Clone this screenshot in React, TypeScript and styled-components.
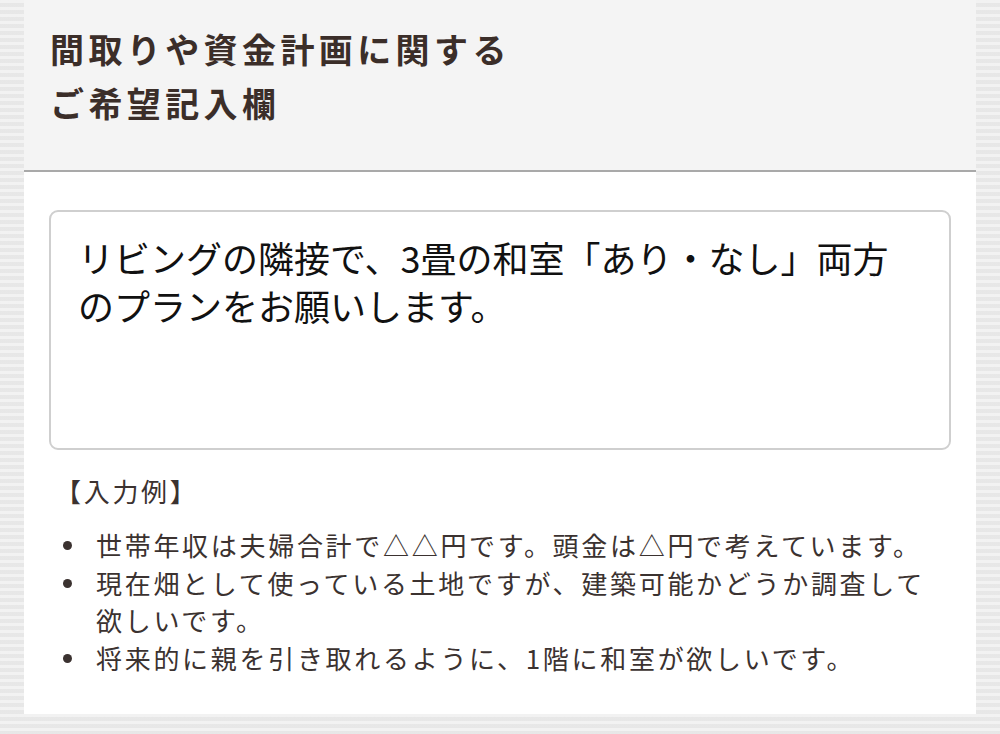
import React from "react";
import styled, { createGlobalStyle } from "styled-components";

const GlobalStyle = createGlobalStyle`
  html, body {
    margin: 0;
    padding: 0;
  }
  body {
    font-family: "Noto Sans CJK JP", "Noto Sans", sans-serif;
    background: #ebebeb;
  }
`;

const Page = styled.div`
  min-height: 734px;
  padding: 0 24px 18px;
  box-sizing: border-box;
  background-color: #ebebeb;
  background-image: repeating-linear-gradient(
    180deg,
    rgba(255, 255, 255, 0.35) 0px,
    rgba(255, 255, 255, 0.35) 3px,
    rgba(0, 0, 0, 0.015) 3px,
    rgba(0, 0, 0, 0.015) 7px
  );
`;

const Card = styled.section`
  background: #ffffff;
  padding-bottom: 38px;
`;

const Header = styled.header`
  background: #f4f4f4;
  height: 172px;
  box-sizing: border-box;
  padding: 22px 26px 0;
  border-bottom: 2px solid #a9a9a9;
`;

const Title = styled.h2`
  margin: 0;
  font-size: 34px;
  line-height: 54px;
  font-weight: 700;
  letter-spacing: 4.4px;
  color: #3b2e29;
`;

const Body = styled.div`
  padding: 38px 25px 0;
`;

const Entry = styled.textarea`
  display: block;
  width: 100%;
  height: 240px;
  box-sizing: border-box;
  margin: 0;
  padding: 21px 20px 0 27px;
  border: 2px solid #cfcfcf;
  border-radius: 9px;
  background: #ffffff;
  font-family: "Noto Sans CJK JP", "Noto Sans", sans-serif;
  font-size: 36px;
  line-height: 48px;
  color: #111111;
  resize: none;
  outline: none;
  overflow: hidden;
`;

const ExampleLabel = styled.p`
  margin: 22px 0 0 6px;
  font-size: 26px;
  line-height: 37px;
  letter-spacing: 2.7px;
  color: #3b3230;
`;

const ExampleList = styled.ul`
  list-style: none;
  margin: 17px 0 0;
  padding: 0 0 0 14px;
  display: flex;
  flex-direction: column;
  gap: 1px;
`;

const ExampleItem = styled.li`
  display: flex;
  align-items: flex-start;
  gap: 24px;
  font-size: 26px;
  line-height: 37px;
  letter-spacing: 2.7px;
  color: #3b3230;
`;

const Dot = styled.span`
  flex: none;
  width: 9px;
  height: 9px;
  margin-top: 15px;
  border-radius: 50%;
  background: #3b3230;
`;

const examples = [
  "世帯年収は夫婦合計で△△円です。頭金は△円で考えています。",
  "現在畑として使っている土地ですが、建築可能かどうか調査して欲しいです。",
  "将来的に親を引き取れるように、1階に和室が欲しいです。",
];

export default function App() {
  return (
    <>
      <GlobalStyle />
      <Page>
        <Card>
          <Header>
            <Title>
              間取りや資金計画に関する
              <br />
              ご希望記入欄
            </Title>
          </Header>
          <Body>
            <Entry
              defaultValue={
                "リビングの隣接で、3畳の和室「あり・なし」両方\nのプランをお願いします。"
              }
            />
            <ExampleLabel>【入力例】</ExampleLabel>
            <ExampleList>
              {examples.map((text) => (
                <ExampleItem key={text}>
                  <Dot />
                  <span>{text}</span>
                </ExampleItem>
              ))}
            </ExampleList>
          </Body>
        </Card>
      </Page>
    </>
  );
}
